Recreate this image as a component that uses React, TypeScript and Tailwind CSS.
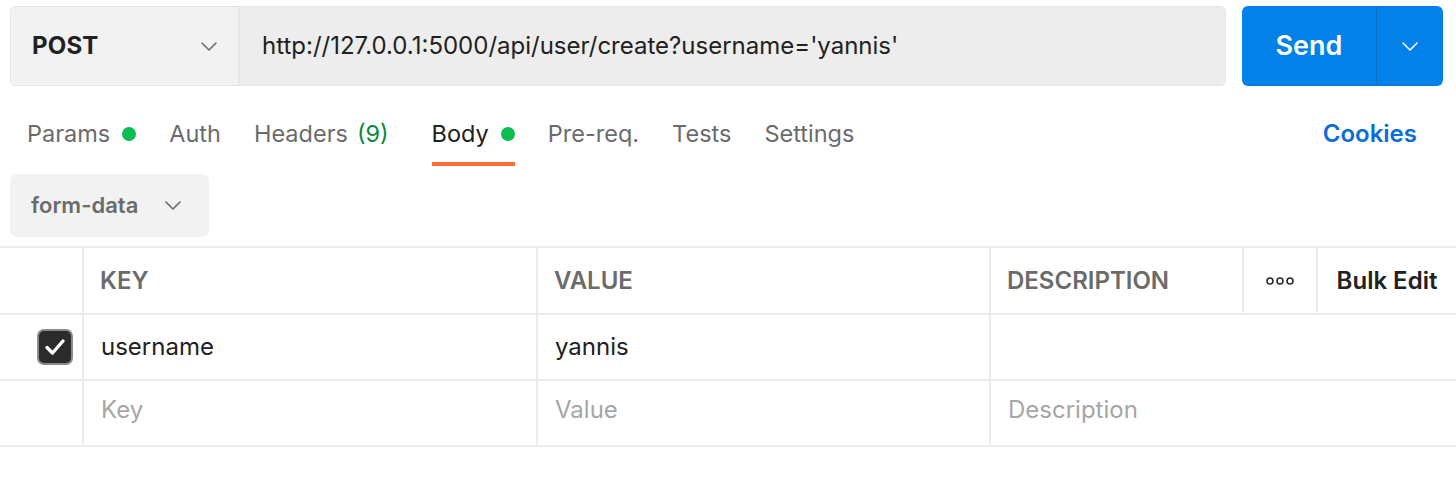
import React from "react";

const Chevron = ({ className }: { className?: string }) => (
  <svg viewBox="0 0 16 9" className={className} fill="none">
    <path d="M1 1l7 7 7-7" stroke="currentColor" strokeWidth="1.6" strokeLinecap="round" strokeLinejoin="round" />
  </svg>
);

const tabs = [
  { label: "Params", dot: true },
  { label: "Auth" },
  { label: "Headers", count: "(9)" },
  { label: "Body", dot: true, active: true },
  { label: "Pre-req." },
  { label: "Tests" },
  { label: "Settings" },
];

export default function App() {
  return (
    <div className="w-[1456px] h-[496px] bg-white font-['Inter',sans-serif] text-[#212121] overflow-hidden">
      {/* Request bar */}
      <div className="flex gap-4 pl-[10px] pr-[13px] pt-[6px]">
        <div className="flex flex-1 h-[80px] rounded-[5px] border border-[#e6e6e6] overflow-hidden">
          <div className="w-[229px] bg-[#f2f2f2] border-r-2 border-[#e6e6e6] flex items-center justify-between pl-[21px] pr-[21px]">
            <span className="text-[24px] font-bold tracking-[0.2px]">POST</span>
            <Chevron className="w-[16px] h-[9px] text-[#6b6b6b]" />
          </div>
          <div className="flex-1 bg-[#ededed] flex items-center pl-[22px] text-[24px]">
            http://127.0.0.1:5000/api/user/create?username='yannis'
          </div>
        </div>
        <div className="w-[201px] h-[80px] flex rounded-[6px] bg-[#0281e8] overflow-hidden text-white">
          <div className="w-[135px] flex items-center justify-center border-r border-[#0a6fc6] text-[27px] font-semibold">
            Send
          </div>
          <div className="flex-1 flex items-center justify-center">
            <Chevron className="w-[16px] h-[9px]" />
          </div>
        </div>
      </div>

      {/* Tabs */}
      <div className="flex items-stretch h-[80px] pl-[27px] pr-[39px]">
        <div className="flex items-stretch gap-[33px]">
          {tabs.map((t) => (
            <div
              key={t.label}
              className={`flex items-center gap-[12px] pt-[20px] border-b-4 text-[23.5px] ${
                t.active ? "border-[#ff6c37] text-[#212121]" : "border-transparent text-[#6b6b6b]"
              } ${t.label === "Body" ? "ml-[10px]" : ""}`}
            >
              <span>
                {t.label}
                {t.count && <span className="text-[#0a8a3a] ml-[9px]">{t.count}</span>}
              </span>
              {t.dot && <span className="w-[14px] h-[14px] rounded-full bg-[#0cbb52]" />}
            </div>
          ))}
        </div>
        <div className="ml-auto flex items-center pt-[16px] text-[24px] font-semibold text-[#0b6ed8]">Cookies</div>
      </div>

      {/* Body type */}
      <div className="pl-[10px] mt-[8px]">
        <div className="w-[199px] h-[63px] rounded-[7px] bg-[#f2f2f2] flex items-center pl-[21px] gap-[27px] text-[#6b6b6b]">
          <span className="text-[22px] font-semibold">form-data</span>
          <Chevron className="w-[16px] h-[9px]" />
        </div>
      </div>

      {/* Table */}
      <div className="mt-[9px] border-t-2 border-[#ececec] text-[24px]">
        <div className="grid grid-cols-[84px_454px_453px_253px_74px_1fr] h-[67px] border-b-2 border-[#ececec]">
          <div className="border-r-2 border-[#ececec]" />
          <div className="border-r-2 border-[#ececec] flex items-center pl-[16px] font-semibold text-[#6b6b6b]">KEY</div>
          <div className="border-r-2 border-[#ececec] flex items-center pl-[16px] font-semibold text-[#6b6b6b]">VALUE</div>
          <div className="border-r-2 border-[#ececec] flex items-center pl-[16px] font-semibold text-[#6b6b6b]">DESCRIPTION</div>
          <div className="border-r-2 border-[#ececec] flex items-center justify-center">
            <svg viewBox="0 0 28 8" className="w-[28px] h-[8px]" fill="none" stroke="#2b2b2b" strokeWidth="1.6">
              <circle cx="4" cy="4" r="3" />
              <circle cx="14" cy="4" r="3" />
              <circle cx="24" cy="4" r="3" />
            </svg>
          </div>
          <div className="flex items-center justify-center font-semibold text-[#212121]">Bulk Edit</div>
        </div>

        <div className="grid grid-cols-[84px_454px_453px_1fr] h-[66px] border-b-2 border-[#ececec]">
          <div className="border-r-2 border-[#ececec] flex items-center justify-end pr-[9px]">
            <div className="w-[36px] h-[36px] rounded-[7px] bg-[#2b2b2b] border-2 border-[#8a8a8a] flex items-center justify-center">
              <svg viewBox="0 0 22 18" className="w-[22px] h-[18px]" fill="none">
                <path d="M3 9.5l5.5 5.5L19 3" stroke="white" strokeWidth="3.4" strokeLinecap="round" strokeLinejoin="round" />
              </svg>
            </div>
          </div>
          <div className="border-r-2 border-[#ececec] flex items-center pl-[17px]">username</div>
          <div className="border-r-2 border-[#ececec] flex items-center pl-[17px]">yannis</div>
          <div />
        </div>

        <div className="grid grid-cols-[84px_454px_453px_1fr] h-[66px] border-b-2 border-[#ececec] text-[#a6a6a6]">
          <div className="border-r-2 border-[#ececec]" />
          <div className="border-r-2 border-[#ececec] flex items-center pl-[17px] pb-[6px]">Key</div>
          <div className="border-r-2 border-[#ececec] flex items-center pl-[17px] pb-[6px]">Value</div>
          <div className="flex items-center pl-[17px] pb-[6px]">Description</div>
        </div>
      </div>
    </div>
  );
}
